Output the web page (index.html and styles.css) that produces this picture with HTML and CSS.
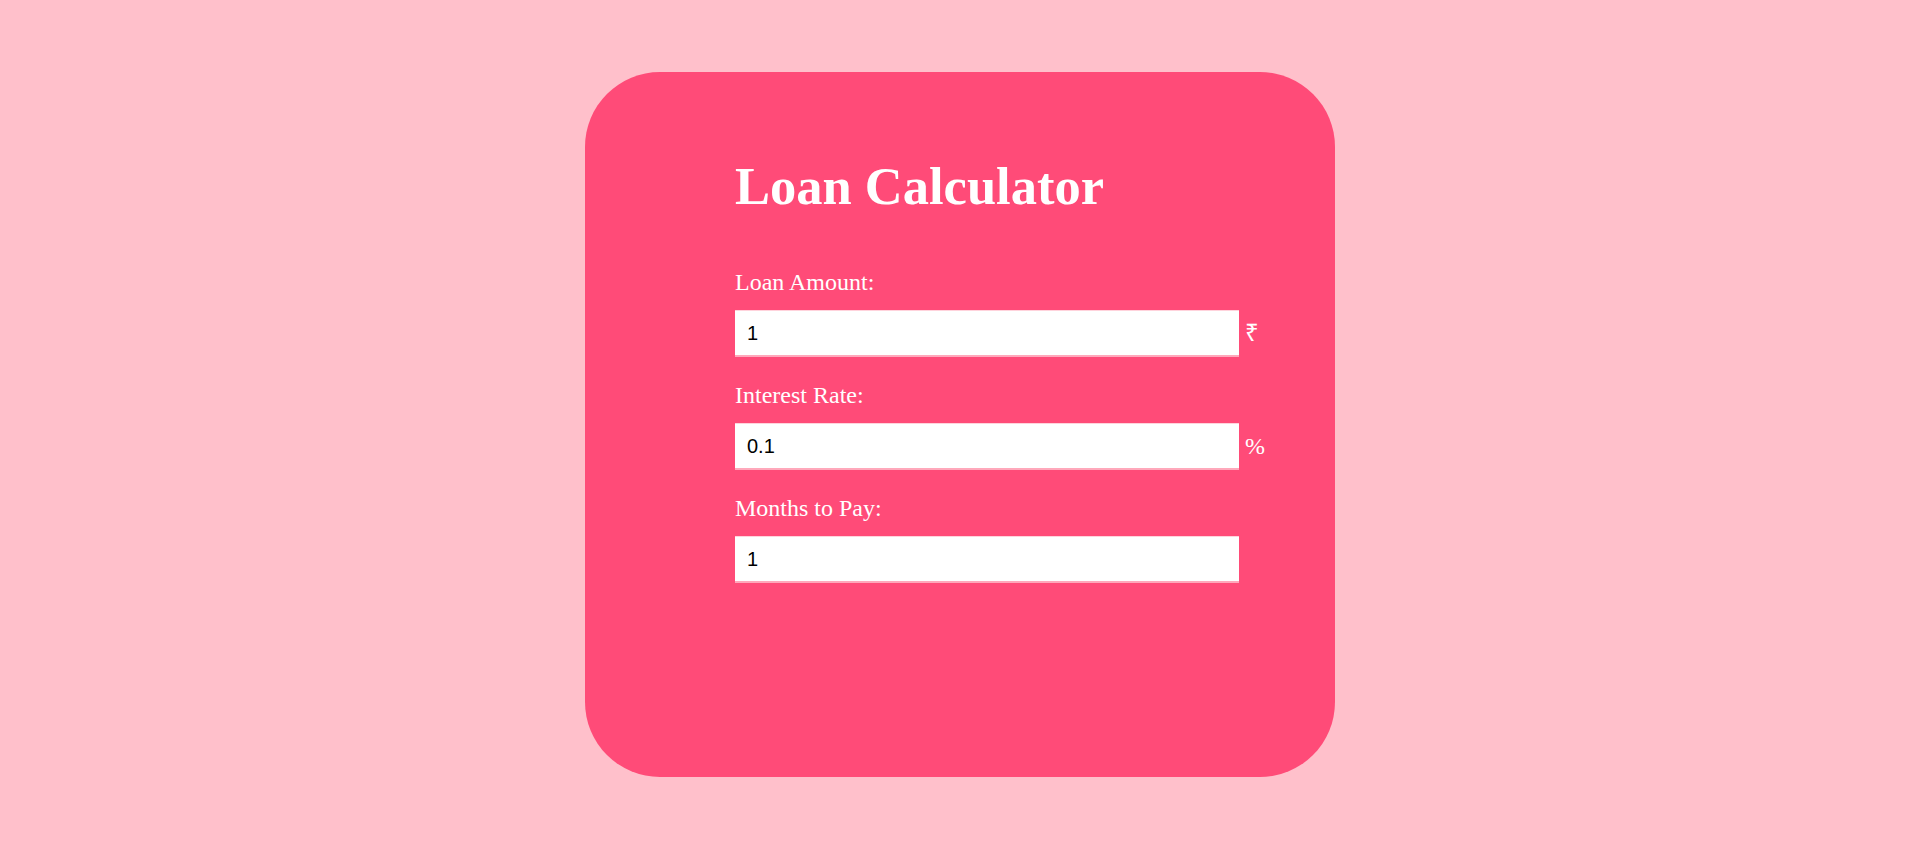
FILE: index.html
```html
<!DOCTYPE html>
<html lang="en">
<head>
<meta charset="utf-8">
<title>Loan Calculator</title>
<link rel="stylesheet" href="styles.css">
</head>
<body>
<main class="card">
  <h1 class="title">Loan Calculator</h1>
  <div class="field">
    <label class="label" for="amount">Loan Amount:</label>
    <div class="row">
      <input class="input" id="amount" type="number" value="1">
      <span class="unit">₹</span>
    </div>
  </div>
  <div class="field">
    <label class="label" for="rate">Interest Rate:</label>
    <div class="row">
      <input class="input" id="rate" type="number" value="0.1">
      <span class="unit">%</span>
    </div>
  </div>
  <div class="field">
    <label class="label" for="months">Months to Pay:</label>
    <div class="row">
      <input class="input" id="months" type="number" value="1">
    </div>
  </div>
</main>
</body>
</html>
```
FILE: styles.css
```css
html, body {
  margin: 0;
  padding: 0;
}
body {
  background: #ffc0cb;
  height: 100vh;
  display: flex;
  align-items: center;
  justify-content: center;
  font-family: "Liberation Serif", "Times New Roman", serif;
  color: #ffffff;
}
.card {
  box-sizing: border-box;
  width: 750px;
  height: 705px;
  background: #ff4b78;
  border-radius: 75px;
  padding: 84px 0 0 150px;
}
.title {
  margin: 0 0 53px 0;
  font-size: 52.5px;
  font-weight: bold;
  line-height: 60px;
}
.field {
  margin-bottom: 25px;
}
.label {
  display: block;
  font-size: 24px;
  line-height: 27px;
  margin-bottom: 14px;
}
.row {
  display: flex;
  align-items: center;
}
.input {
  box-sizing: border-box;
  width: 504px;
  height: 47px;
  margin: 0;
  padding: 0 12px;
  border: none;
  border-top: 1px solid #ffd3dc;
  border-bottom: 2px solid #ffa8bb;
  background: #ffffff;
  font-family: "Liberation Sans", Arial, sans-serif;
  font-size: 20px;
  color: #000000;
  outline: none;
  -moz-appearance: textfield;
}
.input::-webkit-outer-spin-button,
.input::-webkit-inner-spin-button {
  -webkit-appearance: none;
  margin: 0;
}
.unit {
  margin-left: 6px;
  font-size: 24px;
  line-height: 27px;
}
```
